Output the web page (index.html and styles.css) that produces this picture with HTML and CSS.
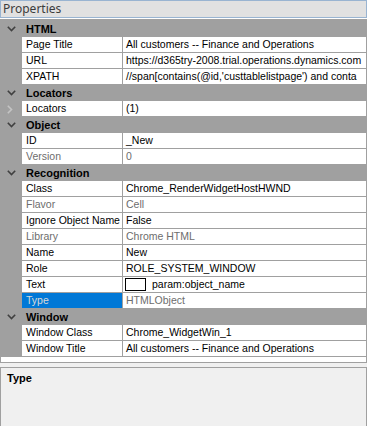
FILE: index.html
```html
<!DOCTYPE html>
<html lang="en">

<head>
  <meta charset="UTF-8">
  <meta name="viewport" content="width=device-width, initial-scale=1.0">
  <title>Properties</title>
  <link rel="stylesheet" href="styles.css">
</head>

<body>
  <div class="titlebar">Properties</div>
  <div class="spacer"></div>

  <!-- grade de propriedades -->
  <div class="grid">
    <div class="cat"><span class="glyph"><svg width="9" height="6" viewBox="0 0 9 6"><polyline points="0.8,0.8 4.5,4.5 8.2,0.8" fill="none" stroke="#404040" stroke-width="1.6"/></svg></span>HTML</div>
    <div class="prop"><span class="margin"></span><span class="name">Page Title</span><span class="value">All customers -- Finance and Operations</span></div>
    <div class="prop"><span class="margin"></span><span class="name">URL</span><span class="value">https://d365try-2008.trial.operations.dynamics.com</span></div>
    <div class="prop"><span class="margin"></span><span class="name">XPATH</span><span class="value">//span[contains(@id,'custtablelistpage') and conta</span></div>

    <div class="cat"><span class="glyph"><svg width="9" height="6" viewBox="0 0 9 6"><polyline points="0.8,0.8 4.5,4.5 8.2,0.8" fill="none" stroke="#404040" stroke-width="1.6"/></svg></span>Locators</div>
    <div class="prop"><span class="margin"><svg class="expand" width="6" height="9" viewBox="0 0 6 9"><polyline points="0.8,0.8 4.5,4.5 0.8,8.2" fill="none" stroke="#c4c4c4" stroke-width="1.6"/></svg></span><span class="name">Locators</span><span class="value">(1)</span></div>

    <div class="cat"><span class="glyph"><svg width="9" height="6" viewBox="0 0 9 6"><polyline points="0.8,0.8 4.5,4.5 8.2,0.8" fill="none" stroke="#404040" stroke-width="1.6"/></svg></span>Object</div>
    <div class="prop"><span class="margin"></span><span class="name">ID</span><span class="value">_New</span></div>
    <div class="prop ro"><span class="margin"></span><span class="name">Version</span><span class="value">0</span></div>

    <div class="cat"><span class="glyph"><svg width="9" height="6" viewBox="0 0 9 6"><polyline points="0.8,0.8 4.5,4.5 8.2,0.8" fill="none" stroke="#404040" stroke-width="1.6"/></svg></span>Recognition</div>
    <div class="prop"><span class="margin"></span><span class="name">Class</span><span class="value">Chrome_RenderWidgetHostHWND</span></div>
    <div class="prop ro"><span class="margin"></span><span class="name">Flavor</span><span class="value">Cell</span></div>
    <div class="prop"><span class="margin"></span><span class="name">Ignore Object Name</span><span class="value">False</span></div>
    <div class="prop ro"><span class="margin"></span><span class="name">Library</span><span class="value">Chrome HTML</span></div>
    <div class="prop"><span class="margin"></span><span class="name">Name</span><span class="value">New</span></div>
    <div class="prop"><span class="margin"></span><span class="name">Role</span><span class="value">ROLE_SYSTEM_WINDOW</span></div>
    <div class="prop"><span class="margin"></span><span class="name">Text</span><span class="value"><span class="swatch"></span>param:object_name</span></div>
    <div class="prop ro selected"><span class="margin"></span><span class="name">Type</span><span class="value">HTMLObject</span></div>

    <div class="cat"><span class="glyph"><svg width="9" height="6" viewBox="0 0 9 6"><polyline points="0.8,0.8 4.5,4.5 8.2,0.8" fill="none" stroke="#404040" stroke-width="1.6"/></svg></span>Window</div>
    <div class="prop"><span class="margin"></span><span class="name">Window Class</span><span class="value">Chrome_WidgetWin_1</span></div>
    <div class="prop"><span class="margin"></span><span class="name">Window Title</span><span class="value">All customers -- Finance and Operations</span></div>
  </div>

  <!-- descricao -->
  <div class="desc">
    <div class="desc-title">Type</div>
  </div>
</body>

</html>
```

FILE: styles.css
```css
/* painel de propriedades */
body {
  margin: 0;
  width: 367px;
  height: 426px;
  background: #f0f0f0;
  font-family: "Liberation Sans", Arial, sans-serif;
  font-size: 10.5px;
  color: #000;
  overflow: hidden;
}

.titlebar {
  height: 16px;
  border: 1px solid #99b4d1;
  background: #e1e1e1;
  color: #3c3c3c;
  font-family: "Noto Sans", sans-serif;
  font-size: 12px;
  line-height: 16px;
  padding-left: 2px;
}

.spacer {
  height: 1px;
  background: #fff;
}

.grid {
  height: 341px;
  background: #fff;
  border: 1px solid #a0a0a0;
  border-top-width: 2px;
  display: flex;
  flex-direction: column;
}

.cat {
  height: 16px;
  flex: none;
  display: flex;
  align-items: center;
  background: #a0a0a0;
  font-size: 11px;
  font-weight: bold;
}

.glyph {
  width: 25px;
  display: flex;
  justify-content: flex-start;
  padding-left: 6px;
  box-sizing: border-box;
}

.prop {
  height: 16px;
  flex: none;
  display: flex;
}

.margin {
  width: 21px;
  flex: none;
  background: #a0a0a0;
  display: flex;
  align-items: center;
  padding-left: 6px;
  box-sizing: border-box;
}

.name {
  width: 101px;
  flex: none;
  border-right: 1px solid #a0a0a0;
  border-bottom: 1px solid #a0a0a0;
  padding-left: 4px;
  box-sizing: border-box;
  line-height: 15px;
  white-space: nowrap;
  overflow: hidden;
}

.value {
  flex: 1;
  border-bottom: 1px solid #a0a0a0;
  padding-left: 3px;
  line-height: 15px;
  white-space: nowrap;
  overflow: hidden;
  display: flex;
  align-items: center;
}

.ro .name,
.ro .value {
  color: #6d6d6d;
}

.selected .name {
  background: #0078d7;
  color: #d8d8d8;
}

.swatch {
  width: 19px;
  height: 11px;
  border: 1px solid #000;
  background: #fff;
  margin-left: -1px;
  margin-right: 6px;
  flex: none;
}

.desc {
  margin-top: 4px;
  height: 60px;
  border: 1px solid #a0a0a0;
  border-bottom: none;
  background: #f0f0f0;
}

.desc-title {
  font-size: 11px;
  font-weight: bold;
  padding: 4px 0 0 6px;
}
```
